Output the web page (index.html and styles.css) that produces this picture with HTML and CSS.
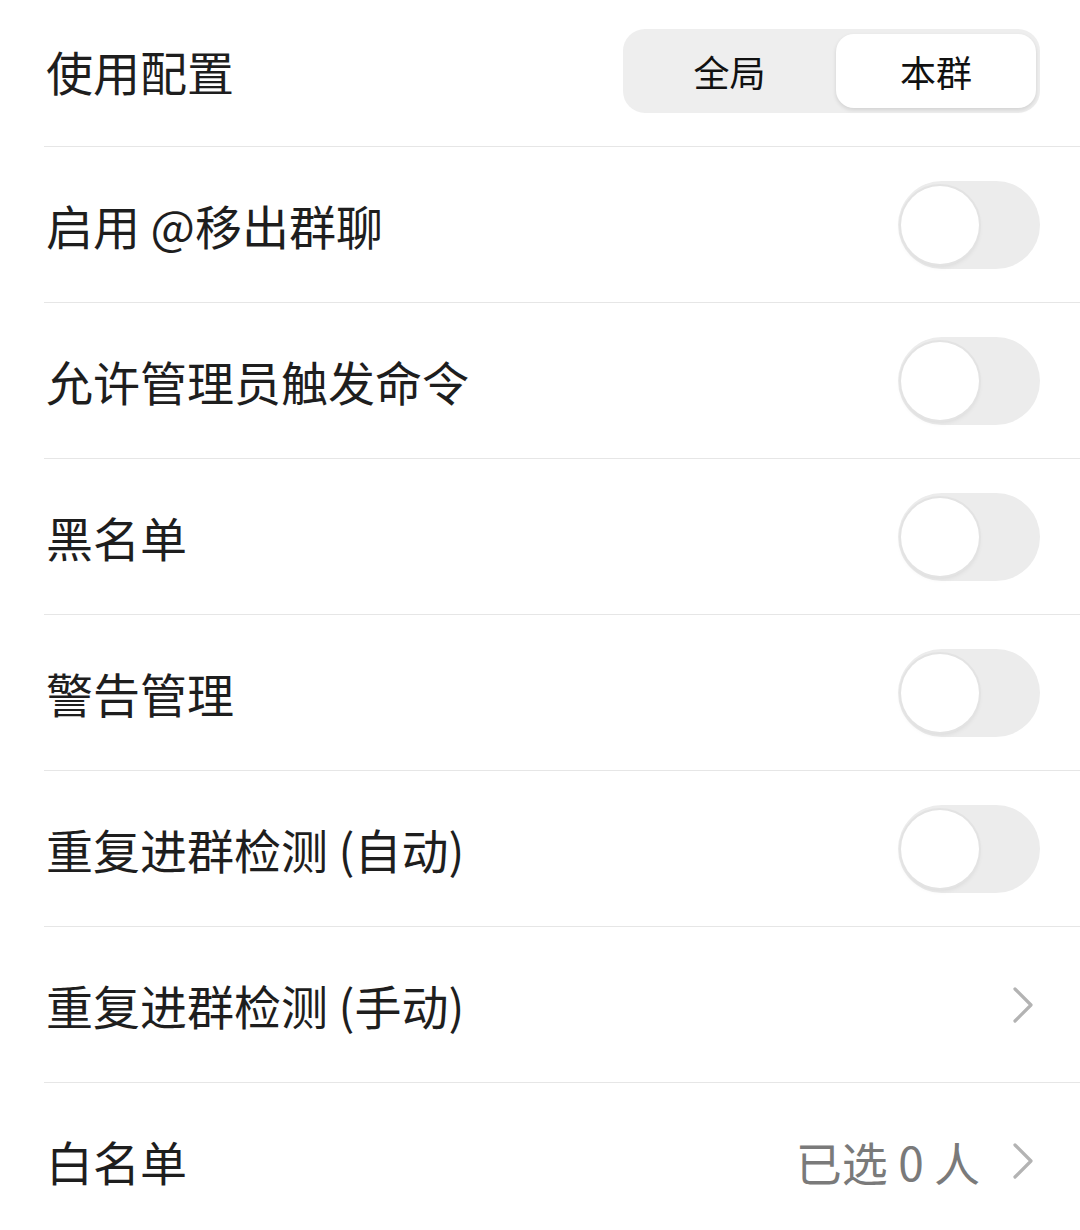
FILE: index.html
```html
<!DOCTYPE html>
<html lang="zh-CN">
<head>
    <meta charset="UTF-8">
    <meta name="viewport" content="width=device-width, initial-scale=1.0">
    <title>群设置</title>
    <link rel="stylesheet" href="styles.css">
</head>
<body>
    <div class="settings">
        <div class="row row-first">
            <span class="label">使用配置</span>
            <div class="segment">
                <span class="seg-item">全局</span>
                <span class="seg-item active">本群</span>
            </div>
        </div>
        <div class="row">
            <span class="label">启用 @移出群聊</span>
            <span class="switch"><span class="knob"></span></span>
        </div>
        <div class="row">
            <span class="label">允许管理员触发命令</span>
            <span class="switch"><span class="knob"></span></span>
        </div>
        <div class="row">
            <span class="label">黑名单</span>
            <span class="switch"><span class="knob"></span></span>
        </div>
        <div class="row">
            <span class="label">警告管理</span>
            <span class="switch"><span class="knob"></span></span>
        </div>
        <div class="row">
            <span class="label">重复进群检测 (自动)</span>
            <span class="switch"><span class="knob"></span></span>
        </div>
        <div class="row">
            <span class="label">重复进群检测 (手动)</span>
            <svg class="chevron" width="22" height="36" viewBox="0 0 22 36">
                <path d="M3 2 L19 18 L3 34" fill="none" stroke="#b3b3b3" stroke-width="3.2" stroke-linecap="round" stroke-linejoin="round"/>
            </svg>
        </div>
        <div class="row">
            <span class="label">白名单</span>
            <div class="value-wrap">
                <span class="value">已选 0 人</span>
                <svg class="chevron" width="22" height="36" viewBox="0 0 22 36">
                    <path d="M3 2 L19 18 L3 34" fill="none" stroke="#b3b3b3" stroke-width="3.2" stroke-linecap="round" stroke-linejoin="round"/>
                </svg>
            </div>
        </div>
    </div>
</body>
</html>
```

FILE: styles.css
```css
body {
    margin: 0;
    background-color: #ffffff;
    font-family: "Noto Sans CJK SC", "Noto Sans", sans-serif;
    color: #1e1e1e;
}
.settings {
    padding-left: 44px;
}
.row {
    display: flex;
    align-items: center;
    justify-content: space-between;
    height: 155px;
    padding: 0 40px 0 2px;
    border-top: 1px solid #e6e6e6;
}
.row-first {
    height: 141px;
    padding-bottom: 5px;
    border-top: none;
    border-bottom: 1px solid #e6e6e6;
}
.row-first + .row {
    border-top: none;
}
.label {
    font-size: 47px;
    line-height: 1;
}
.segment {
    display: flex;
    width: 413px;
    height: 74px;
    padding: 5px 4px 5px 0;
    background-color: #eeeeee;
    border-radius: 22px;
}
.seg-item {
    flex: 1;
    display: flex;
    align-items: center;
    justify-content: center;
    font-size: 36px;
    color: #111;
    border-radius: 18px;
}
.seg-item.active {
    flex: 0 0 200px;
    background-color: #ffffff;
    box-shadow: 0 2px 4px rgba(0, 0, 0, 0.12);
}
.switch {
    display: flex;
    align-items: center;
    width: 142px;
    height: 88px;
    border-radius: 44px;
    background-color: #ececec;
    box-sizing: border-box;
    padding-left: 3px;
}
.knob {
    width: 78px;
    height: 78px;
    border-radius: 50%;
    background-color: #ffffff;
    box-shadow: 0 0 0 2px #e3e3e3, 0 3px 5px rgba(0, 0, 0, 0.08);
}
.chevron {
    margin-right: 6px;
}
.value-wrap {
    display: flex;
    align-items: center;
    gap: 32px;
}
.value {
    font-size: 46px;
    color: #7a7a7a;
    line-height: 1;
}
```
